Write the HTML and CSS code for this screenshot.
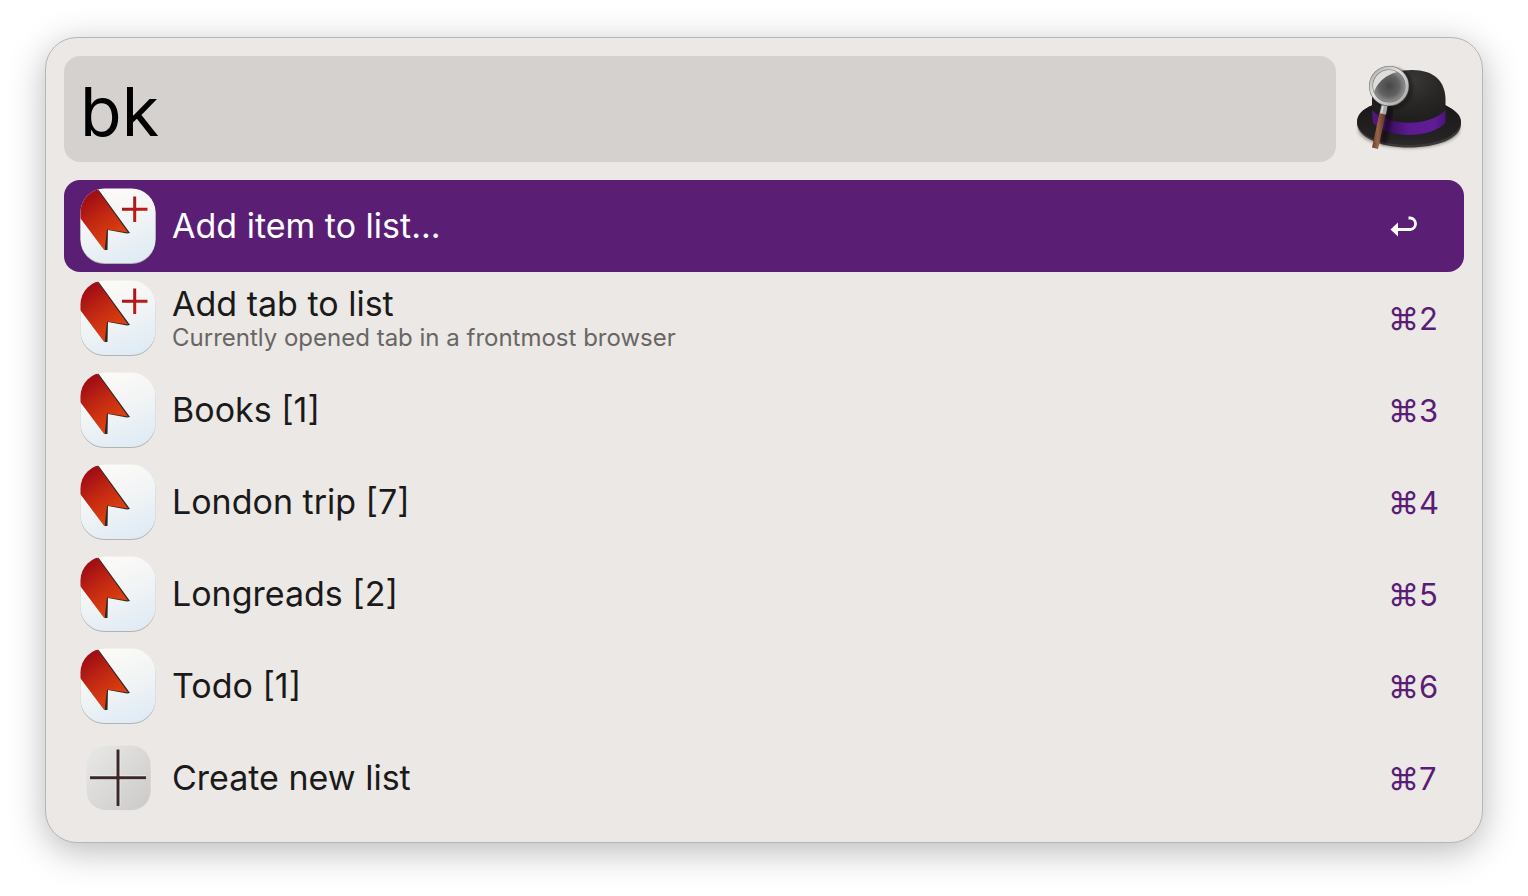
FILE: index.html
```html
<!DOCTYPE html>
<html lang="en">
<head>
<meta charset="utf-8">
<title>Launcher</title>
<link rel="stylesheet" href="styles.css">
</head>
<body>
<svg class="defs" width="0" height="0" aria-hidden="true">
  <defs>
    <linearGradient id="tile" x1="0.3" y1="0" x2="0.7" y2="1"><stop offset="0" stop-color="#fdfbf7"/><stop offset="0.5" stop-color="#f1f4f5"/><stop offset="1" stop-color="#dfebf5"/></linearGradient>
    <linearGradient id="red" gradientUnits="userSpaceOnUse" x1="6" y1="10" x2="36" y2="52"><stop offset="0" stop-color="#a00d14"/><stop offset="0.5" stop-color="#c42a12"/><stop offset="1" stop-color="#e0430f"/></linearGradient>
    <linearGradient id="plusred" gradientUnits="userSpaceOnUse" x1="42" y1="9" x2="67" y2="34"><stop offset="0" stop-color="#a30f18"/><stop offset="1" stop-color="#c62318"/></linearGradient>
    <clipPath id="tileclip"><rect x="0.5" y="0.5" width="75" height="75" rx="24"/></clipPath>
    <symbol id="bookmark" viewBox="0 0 76 76">
      <rect x="0.5" y="1" width="75" height="75" rx="24" fill="#b4b2b0"/>
      <rect x="0.5" y="0.5" width="75" height="74.5" rx="24" fill="url(#tile)"/>
      <g clip-path="url(#tileclip)">
        <path d="M18 1 L50 45 L47 45.500 L28 42 L27.500 62 L24.500 62 Z" fill="#2b2928"/>
        <path d="M-2 4 L17 1 L48 44.500 L27 41.500 L24.500 62.500 L-2 27 Z" fill="url(#red)"/>
      </g>
    </symbol>
    <symbol id="bookmark-add" viewBox="0 0 76 76">
      <use href="#bookmark" width="76" height="76"/>
      <path d="M42 19.700h25.500v3H42zM53.200 8.500h3V34h-3z" fill="url(#plusred)"/>
    </symbol>
    <linearGradient id="grey" x1="0" y1="0" x2="1" y2="1"><stop offset="0" stop-color="#e9e9e8"/><stop offset="1" stop-color="#cbc9c7"/></linearGradient>
    <symbol id="create" viewBox="0 0 76 76">
      <rect x="6" y="5" width="65" height="65.500" rx="20" fill="url(#grey)" stroke="#eeedeb" stroke-width="0.600"/>
      <path d="M10 37.700h56M38 9.500v56.500" stroke="#f3f1f0" stroke-width="4.500"/>
      <path d="M10 37.700h56M38 9.500v56.500" stroke="#3a2828" stroke-width="3"/>
    </symbol>
    <linearGradient id="band" x1="0" x2="1" y1="0" y2="0"><stop offset="0" stop-color="#521a80"/><stop offset="0.250" stop-color="#3c1064"/><stop offset="0.500" stop-color="#5c1a90"/><stop offset="0.850" stop-color="#601c94"/><stop offset="1" stop-color="#4b147b"/></linearGradient>
    <radialGradient id="crown" cx="0.550" cy="0.180" r="0.750"><stop offset="0" stop-color="#3a3737"/><stop offset="0.500" stop-color="#292626"/><stop offset="1" stop-color="#1e1b1b"/></radialGradient>
    <linearGradient id="brim" x1="0" x2="0" y1="0" y2="1"><stop offset="0" stop-color="#1a1818"/><stop offset="0.800" stop-color="#242222"/><stop offset="1" stop-color="#2c2a2a"/></linearGradient>
    <radialGradient id="glass"><stop offset="0" stop-color="#474747"/><stop offset="0.600" stop-color="#606160"/><stop offset="1" stop-color="#969795"/></radialGradient>
    <linearGradient id="rim" x1="0" x2="1" y1="0" y2="1"><stop offset="0" stop-color="#aaa9a7"/><stop offset="0.400" stop-color="#e1e1df"/><stop offset="1" stop-color="#a4a4a2"/></linearGradient>
    <linearGradient id="wood" x1="0" x2="1" y1="0" y2="0"><stop offset="0" stop-color="#673d27"/><stop offset="0.400" stop-color="#9a6446"/><stop offset="1" stop-color="#543121"/></linearGradient>
    <clipPath id="lens"><circle cx="35" cy="30" r="17"/></clipPath>
    <filter id="soft" x="-20%" y="-20%" width="140%" height="140%"><feGaussianBlur stdDeviation="1.500"/></filter>
  </defs>
</svg>
<main class="launcher">
  <div class="search">
    <input class="query" type="text" value="bk" aria-label="Search" spellcheck="false" autocomplete="off">
    <svg class="hat" viewBox="0 0 110 106" aria-hidden="true">
      <ellipse cx="55" cy="73" rx="51" ry="19.500" fill="#554f4c" opacity="0.500" filter="url(#soft)"/>
      <path d="M3 67C3 59 9 53 19 49L91 49C101 54 107 60 107 68C107 83 82 91.500 55 91.500C26 91.500 3 81 3 67Z" fill="#3b3939"/>
      <path d="M3 66C3 58 9 53 19 49L91 49C101 54 107 59 107 66C106 80 82 89 55 89C27 89 4 80 3 66Z" fill="url(#brim)"/>
      <path d="M18 64V44C18 26 34 14 58 14C80 14 91 25 91.500 43V64C78 78 34 78 18 64Z" fill="url(#crown)"/>
      <path d="M18 54C34 71 76 71 91.500 54V67C76 83 34 83 19 67Z" fill="url(#band)"/>
      <circle cx="38" cy="32" r="18.500" fill="none" stroke="#090909" stroke-width="4" opacity="0.500" filter="url(#soft)"/>
      <path d="M37 52L29 88" stroke="#080510" stroke-width="6" opacity="0.500" filter="url(#soft)"/>
      <g clip-path="url(#lens)">
        <circle cx="35" cy="30" r="17" fill="url(#glass)"/>
        <path d="M17 40V9H50V15C34 16 22 26 19 40Z" fill="#deddda"/>
      </g>
      <circle cx="35" cy="30" r="18" fill="none" stroke="#71716f" stroke-width="4"/>
      <circle cx="35" cy="30" r="18" fill="none" stroke="url(#rim)" stroke-width="3"/>
      <path d="M25.500 57H32L24 93L18 91.500Z" fill="url(#wood)"/>
      <path d="M27.500 49L33.500 50L32 58.500L25.500 57.500Z" fill="#aaa9a9"/>
      <path d="M29 50L27.500 57" stroke="#dedede" stroke-width="1.500"/>
    </svg>
  </div>
  <ul class="results">
    <li><button class="result selected" type="button"><svg class="icon" aria-hidden="true"><use href="#bookmark-add"/></svg><span class="text"><span class="title">Add item to list...</span></span><span class="key"><svg class="return" viewBox="-2 0 30 24" role="img" aria-label="Return"><path d="M7 14.500H20.500A5.800 5.800 0 0 0 20.500 3H18.500" fill="none" stroke="#fff" stroke-width="2.800"/><path d="M0.500 14.500L8 7.500V21.500Z" fill="#fff"/></svg></span></button></li>
    <li><button class="result" type="button"><svg class="icon" aria-hidden="true"><use href="#bookmark-add"/></svg><span class="text"><span class="title">Add tab to list</span><span class="subtitle">Currently opened tab in a frontmost browser</span></span><span class="key">⌘2</span></button></li>
    <li><button class="result" type="button"><svg class="icon" aria-hidden="true"><use href="#bookmark"/></svg><span class="text"><span class="title">Books [1]</span></span><span class="key">⌘3</span></button></li>
    <li><button class="result" type="button"><svg class="icon" aria-hidden="true"><use href="#bookmark"/></svg><span class="text"><span class="title">London trip [7]</span></span><span class="key">⌘4</span></button></li>
    <li><button class="result" type="button"><svg class="icon" aria-hidden="true"><use href="#bookmark"/></svg><span class="text"><span class="title">Longreads [2]</span></span><span class="key">⌘5</span></button></li>
    <li><button class="result" type="button"><svg class="icon" aria-hidden="true"><use href="#bookmark"/></svg><span class="text"><span class="title">Todo [1]</span></span><span class="key">⌘6</span></button></li>
    <li><button class="result" type="button"><svg class="icon" aria-hidden="true"><use href="#create"/></svg><span class="text"><span class="title">Create new list</span></span><span class="key">⌘7</span></button></li>
  </ul>
</main>
</body>
</html>
```
FILE: styles.css
```css
* {
  box-sizing: border-box;
}

body {
  margin: 0;
  padding: 37px 45px 53px;
  background: #fff;
  font-family: Inter, "Liberation Sans", sans-serif;
}

.defs {
  position: absolute;
}

.launcher {
  display: flex;
  flex-direction: column;
  gap: 18px;
  padding: 18px;
  border: 1px solid #b7b6b5;
  border-radius: 32px;
  background: #ebe8e5;
  box-shadow: 0 8px 36px rgba(0, 0, 0, 0.28);
}

.search {
  display: flex;
  gap: 18px;
}

.query {
  flex: 1;
  min-width: 0;
  height: 106px;
  padding: 4px 16px 0;
  border: 0;
  border-radius: 16px;
  outline: 0;
  background: #d5d1cf;
  color: #000;
  font: 400 68px Inter, "Liberation Sans", sans-serif;
}

.hat {
  width: 110px;
  height: 106px;
}

.results {
  margin: 0;
  padding: 0;
  list-style: none;
}

.result {
  display: flex;
  align-items: center;
  gap: 16px;
  width: 100%;
  height: 92px;
  padding: 0 28px 0 16px;
  border: 0;
  border-radius: 16px;
  background: none;
  color: #1b1a1a;
  font: 400 34px/40px Inter, "Liberation Sans", sans-serif;
  text-align: left;
}

.icon {
  flex: none;
  width: 76px;
  height: 76px;
}

.text {
  display: flex;
  flex: 1;
  flex-direction: column;
}

.subtitle {
  color: #686664;
  font-size: 24px;
  line-height: 28px;
}

.key {
  width: 48px;
  padding-top: 2px;
  color: #5a1d75;
  font-size: 31px;
  white-space: nowrap;
}

.return {
  display: block;
  width: 30px;
  height: 24px;
}

.selected {
  background: #5a1e75;
  color: #fff;
}
```
